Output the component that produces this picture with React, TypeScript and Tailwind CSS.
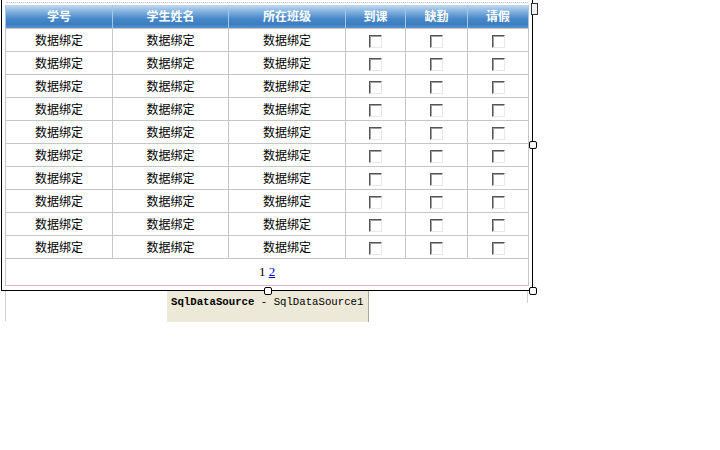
import React from 'react';

const columns = [
  { title: '学号', width: 107 },
  { title: '学生姓名', width: 116 },
  { title: '所在班级', width: 117 },
  { title: '到课', width: 60 },
  { title: '缺勤', width: 62 },
  { title: '请假', width: 61 },
];

const rows = Array.from({ length: 10 }, (_, i) => i);

function Box() {
  return (
    <span className="inline-block w-[13px] h-[13px] align-middle border border-t-[#555] border-l-[#555] border-b-[#e8e8e8] border-r-[#e8e8e8] bg-white shadow-[inset_1px_1px_0_#a0a0a0]" />
  );
}

function Handle({ className }: { className: string }) {
  return (
    <span className={`absolute w-[8px] h-[8px] rounded-[2px] border border-black bg-white ${className}`} />
  );
}

export default function App() {
  return (
    <div className="w-[720px] h-[450px] bg-white font-['Noto_Sans_CJK_SC',sans-serif] text-black">
      <div className="relative ml-[1px] w-[532px] h-[291px] border-l border-r border-b border-black">
        <div className="mx-[3px] pt-[2px]">
          <div className="border-t border-dotted border-[#d9b8c4] mx-[1px]" />
          <table className="mt-[2px] border-collapse table-fixed w-[523px] text-[12px]">
            <thead>
              <tr className="h-[23px] bg-[linear-gradient(#c4dbf1_0%,#7fb0de_30%,#4787c9_60%,#3c7dc0_85%,#5a94cf_100%)]">
                {columns.map((c) => (
                  <th
                    key={c.title}
                    style={{ width: c.width }}
                    className="border-x border-[#a9c6e4] text-white font-bold text-center leading-none"
                  >
                    {c.title}
                  </th>
                ))}
              </tr>
            </thead>
            <tbody>
              {rows.map((r) => (
                <tr key={r} className="h-[23px]">
                  <td className="border border-[#c6c6c6] text-center">数据绑定</td>
                  <td className="border border-[#c6c6c6] text-center">数据绑定</td>
                  <td className="border border-[#c6c6c6] text-center">数据绑定</td>
                  <td className="border border-[#c6c6c6] text-center"><Box /></td>
                  <td className="border border-[#c6c6c6] text-center"><Box /></td>
                  <td className="border border-[#c6c6c6] text-center"><Box /></td>
                </tr>
              ))}
              <tr className="h-[27px]">
                <td colSpan={6} className="border border-[#c6c6c6] border-b-[#dcb8c4] text-center font-['Liberation_Serif',serif] text-[13px]">
                  1 <span className="text-[#0000cc] underline">2</span>
                </td>
              </tr>
            </tbody>
          </table>
        </div>
        <span className="absolute right-[-6px] top-[3px] w-[7px] h-[12px] border border-[#333] bg-[#f4f4f4]" />
        <Handle className="right-[-5px] top-[141px]" />
        <Handle className="right-[-5px] bottom-[-5px]" />
        <Handle className="left-[262px] bottom-[-5px]" />
      </div>
      <div className="flex">
        <div className="ml-[5px] w-[1px] h-[30px] bg-[#d0d0d0]" />
        <div className="ml-[161px] w-[202px] h-[31px] bg-[#ece9d8] border-r border-[#aca899] pl-[4px] pt-[4px] font-['Liberation_Mono',monospace] text-[10.7px] leading-[14px] whitespace-nowrap">
          <span className="font-bold">SqlDataSource</span> - SqlDataSource1
        </div>
        <div className="ml-[158px] w-[1px] h-[12px] bg-[#d0d0d0]" />
      </div>
    </div>
  );
}
